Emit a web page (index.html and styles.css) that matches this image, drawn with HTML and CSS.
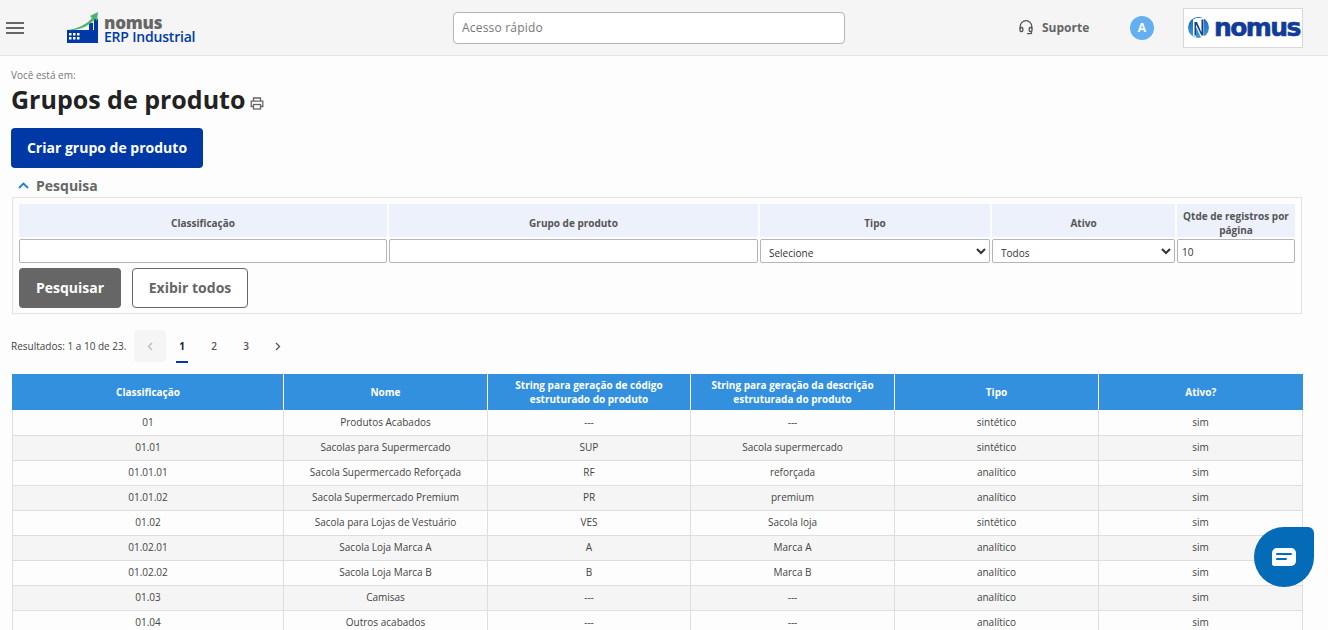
FILE: index.html
```html
<!DOCTYPE html>
<html lang="pt-BR">
<head>
<meta charset="utf-8">
<title>Grupos de produto</title>
<link rel="stylesheet" href="styles.css">
</head>
<body>
<header class="topbar">
  <button class="burger" aria-label="Menu"><span></span><span></span><span></span></button>
  <div class="brand">
    <svg class="brand-mark" width="31" height="31" viewBox="0 0 31 31">
      <rect x="0" y="18" width="31" height="13" fill="#0039a6"/>
      <rect x="22" y="11" width="4" height="8" fill="#0039a6"/>
      <rect x="27" y="7" width="4" height="12" fill="#0039a6"/>
      <path d="M0 18C10 17 19 13 25 6l-2-2 8-4-1 9-2-2C22 14 12 19 0 18z" fill="#4fb36f"/>
      <g fill="#fff"><rect x="2" y="21" width="2.500" height="2.500"/><rect x="6" y="21" width="2.500" height="2.500"/><rect x="10" y="21" width="2.500" height="2.500"/><rect x="2" y="25" width="2.500" height="2.500"/><rect x="6" y="25" width="2.500" height="2.500"/><rect x="10" y="25" width="2.500" height="2.500"/></g>
    </svg>
    <div class="brand-text"><span class="brand-top">nomus</span><span class="brand-bottom">ERP Industrial</span></div>
  </div>
  <input class="quick" type="text" placeholder="Acesso rápido">
  <div class="support">
    <svg width="14" height="15" viewBox="0 0 14 15" fill="none" stroke="#555" stroke-width="1.300"><path d="M1.200 9V6.500a5.800 5.800 0 0 1 11.600 0V9"/><rect x="1" y="7.500" width="2.800" height="4" rx="1"/><rect x="10.200" y="7.500" width="2.800" height="4" rx="1"/><path d="M12.500 11.500v1.200a1 1 0 0 1-1 1H8"/></svg>
    <span>Suporte</span>
  </div>
  <div class="avatar">A</div>
  <div class="company">
    <svg width="21" height="21" viewBox="0 0 21 21">
      <defs><linearGradient id="nb" x1="0" y1="0" x2="0" y2="1"><stop offset="0" stop-color="#1a66b5"/><stop offset="1" stop-color="#3aa0dc"/></linearGradient></defs>
      <circle cx="10.500" cy="10.500" r="10.500" fill="url(#nb)"/>
      <path d="M5 2.500 8 1h8v19l-3 0.500L8 10v10l-3-1z" fill="#fff"/>
      <path d="M6.500 5h2.500l4.500 10.500V2.500H15.500v16h-2L8 7.500V18.500H6.500z" fill="#12408f"/>
    </svg>
    <span>nomus</span>
  </div>
</header>

<main class="page">
  <p class="crumb">Você está em:</p>
  <div class="title-row">
    <h1>Grupos de produto</h1>
    <svg width="14" height="13" viewBox="0 0 14 13" fill="none" stroke="#666" stroke-width="1.300"><path d="M3.500 4V1h7v3"/><path d="M3.500 9.500H1.200V4.200h11.600v5.300h-2.300"/><rect x="3.500" y="7.500" width="7" height="4.500"/></svg>
  </div>
  <button class="btn-primary">Criar grupo de produto</button>

  <div class="section-head">
    <svg width="11" height="7" viewBox="0 0 11 7" fill="none" stroke="#1c7ed6" stroke-width="1.800"><path d="M1 6l4.500-4.500L10 6"/></svg>
    <span>Pesquisa</span>
  </div>
  <section class="filters">
    <div class="filter-grid">
      <div class="fh">Classificação</div>
      <div class="fh">Grupo de produto</div>
      <div class="fh">Tipo</div>
      <div class="fh">Ativo</div>
      <div class="fh">Qtde de registros por página</div>
      <input class="field" type="text">
      <input class="field" type="text">
      <select class="field field-select"><option>Selecione</option></select>
      <select class="field field-select"><option>Todos</option></select>
      <input class="field" type="text" value="10">
    </div>
    <div class="filter-actions">
      <button class="btn-dark">Pesquisar</button>
      <button class="btn-outline">Exibir todos</button>
    </div>
  </section>

  <nav class="pager">
    <span class="results">Resultados: 1 a 10 de 23.</span>
    <span class="pg pg-disabled"><svg width="6" height="9" viewBox="0 0 6 9" fill="none" stroke="#bbb" stroke-width="1.300"><path d="M5 1L1.500 4.500 5 8"/></svg></span>
    <span class="pg pg-current">1</span>
    <span class="pg">2</span>
    <span class="pg">3</span>
    <span class="pg"><svg width="6" height="9" viewBox="0 0 6 9" fill="none" stroke="#555" stroke-width="1.300"><path d="M1 1l3.500 3.500L1 8"/></svg></span>
  </nav>

  <table class="grid">
    <colgroup><col class="c1"><col class="c2"><col class="c3"><col class="c4"><col class="c5"><col class="c6"></colgroup>
    <thead>
      <tr><th>Classificação</th><th>Nome</th><th>String para geração de código estruturado do produto</th><th>String para geração da descrição estruturada do produto</th><th>Tipo</th><th>Ativo?</th></tr>
    </thead>
    <tbody>
      <tr><td>01</td><td>Produtos Acabados</td><td>---</td><td>---</td><td>sintético</td><td>sim</td></tr>
      <tr><td>01.01</td><td>Sacolas para Supermercado</td><td>SUP</td><td>Sacola supermercado</td><td>sintético</td><td>sim</td></tr>
      <tr><td>01.01.01</td><td>Sacola Supermercado Reforçada</td><td>RF</td><td>reforçada</td><td>analítico</td><td>sim</td></tr>
      <tr><td>01.01.02</td><td>Sacola Supermercado Premium</td><td>PR</td><td>premium</td><td>analítico</td><td>sim</td></tr>
      <tr><td>01.02</td><td>Sacola para Lojas de Vestuário</td><td>VES</td><td>Sacola loja</td><td>sintético</td><td>sim</td></tr>
      <tr><td>01.02.01</td><td>Sacola Loja Marca A</td><td>A</td><td>Marca A</td><td>analítico</td><td>sim</td></tr>
      <tr><td>01.02.02</td><td>Sacola Loja Marca B</td><td>B</td><td>Marca B</td><td>analítico</td><td>sim</td></tr>
      <tr><td>01.03</td><td>Camisas</td><td>---</td><td>---</td><td>analítico</td><td>sim</td></tr>
      <tr><td>01.04</td><td>Outros acabados</td><td>---</td><td>---</td><td>analítico</td><td>sim</td></tr>
    </tbody>
  </table>
</main>

<button class="chat" aria-label="Chat">
  <svg width="24" height="18" viewBox="0 0 24 18"><path d="M5 0h14a5 5 0 0 1 5 5v8a5 5 0 0 1-5 5H1.500L0 16.500V5a5 5 0 0 1 5-5z" fill="#fff"/><path d="M5 6h14M5 11h9" stroke="#036bb8" stroke-width="2" stroke-linecap="round"/></svg>
</button>
</body>
</html>
```

FILE: styles.css
```css
* { box-sizing: border-box; }
html, body { height: 630px; overflow: hidden; }
body {
  margin: 0;
  background: #fdfdfd;
  font-family: "Open Sans", "Liberation Sans", sans-serif;
  color: #333;
}
button { font-family: inherit; cursor: pointer; }

.topbar {
  height: 56px;
  background: #f5f5f5;
  border-bottom: 1px solid #e4e4e4;
  display: flex;
  align-items: center;
}
.burger {
  margin-left: 6px;
  width: 18px;
  height: 12px;
  padding: 0;
  border: 0;
  background: none;
  display: flex;
  flex-direction: column;
  justify-content: space-between;
}
.burger span { display: block; height: 2px; background: #666; }
.brand { margin-left: 43px; display: flex; align-items: flex-end; gap: 6px; width: 129px; height: 31px; flex: none; }
.brand-mark { flex: none; }
.brand-text { display: flex; flex-direction: column; line-height: 14px; margin-bottom: -1px; }
.brand-top { font-size: 17px; font-weight: 800; color: #666; letter-spacing: -0.2px; }
.brand-bottom { font-size: 14px; font-weight: 600; color: #0039a6; white-space: nowrap; letter-spacing: -0.2px; }
.quick {
  margin-left: 257px;
  width: 392px;
  height: 32px;
  border: 1px solid #b5b5b5;
  border-radius: 4px;
  background: #fff;
  padding: 0 8px;
  font: 12px "Open Sans", sans-serif;
  letter-spacing: 0.2px;
}
.quick::placeholder { color: #777; opacity: 1; }
.support { margin-left: 174px; display: flex; align-items: center; gap: 9px; width: 111px; font-size: 12px; font-weight: 700; color: #666; }
.avatar {
  width: 24px; height: 24px; border-radius: 50%;
  background: #64aef2; color: #fff;
  font-size: 12px; font-weight: 700;
  display: flex; align-items: center; justify-content: center;
}
.company {
  margin-left: 29px;
  width: 120px; height: 40px;
  border: 1px solid #d8d8d8;
  background: #fff;
  display: flex; align-items: center; gap: 5px;
  padding-left: 4px;
}
.company span { font: 700 25px/1 "DejaVu Sans", sans-serif; color: #123c96; letter-spacing: -1.6px; -webkit-text-stroke: 0.6px #123c96; }

.page { padding: 0 25px 0 11px; }
.crumb { margin: 12px 0 0; font-size: 10px; line-height: 14px; color: #777; }
.title-row { display: flex; align-items: flex-end; gap: 5px; height: 32px; margin-top: 1px; }
.title-row h1 { margin: 0; font-size: 25px; line-height: 32px; font-weight: 700; color: #222; }
.title-row svg { margin-bottom: 5px; }
.btn-primary {
  display: block;
  margin-top: 13px;
  width: 192px; height: 40px;
  padding: 0 0 2px;
  border: 0; border-radius: 4px;
  background: #0039a6; color: #fff;
  font-size: 14px; font-weight: 700;
}
.section-head { display: flex; align-items: center; gap: 7px; height: 18px; padding-bottom: 2px; margin: 9px 0 0 7px; font-size: 14px; font-weight: 700; color: #666; }
.filters {
  margin: 2px 0 0 1px;
  width: 1290px; height: 117px;
  border: 1px solid #e2e2e2;
  padding: 6px;
}
.filter-grid {
  display: grid;
  grid-template-columns: 368px 369px 230px 183px 118px;
  column-gap: 2px;
  row-gap: 2px;
  grid-template-rows: 33px 24px;
}
.fh {
  background: #ecf1fb;
  display: flex; align-items: center; justify-content: center;
  text-align: center;
  padding-top: 5px;
  font-size: 10px; line-height: 14px; font-weight: 700; color: #555;
}
.field {
  width: 100%; height: 24px;
  border: 1px solid #b5b5b5;
  border-radius: 2px;
  background: #fff;
  padding: 1px 4px 0;
  font: 10px "Open Sans", sans-serif;
  color: #333;
}
.field-select { padding-top: 3px; }
.filter-actions { display: flex; gap: 11px; margin-top: 5px; }
.btn-dark, .btn-outline { height: 40px; padding: 0 0 2px; border-radius: 4px; font-size: 14px; font-weight: 700; }
.btn-dark { width: 102px; background: #666; color: #fff; border: 0; }
.btn-outline { width: 116px; background: #fff; color: #666; border: 1px solid #666; }

.pager { display: flex; align-items: center; height: 32px; margin-top: 16px; }
.results { font-size: 10px; color: #444; width: 123px; }
.pg {
  width: 32px; height: 32px;
  display: flex; align-items: center; justify-content: center;
  font-size: 10px; font-weight: 600; color: #555;
  border-radius: 4px;
  position: relative;
}
.pg-disabled { background: #f5f5f5; }
.pg-current { color: #222; font-weight: 700; }
.pg-current::after {
  content: "";
  position: absolute;
  left: 10px; right: 10px; bottom: -1px;
  height: 2px;
  background: #0039a6;
}

.grid {
  margin: 12px 0 0 1px;
  width: 1290px;
  table-layout: fixed;
  border-collapse: collapse;
}
.c1 { width: 271px; } .c2 { width: 204px; } .c3 { width: 203px; } .c4 { width: 204px; } .c5 { width: 204px; } .c6 { width: 204px; }
.grid th {
  height: 36px;
  background: #3290df;
  color: #fff;
  font-size: 10px; line-height: 14px; font-weight: 700;
  border-left: 1px solid #fff;
  padding: 0 10px;
}
.grid th:first-child { border-left-color: #3290df; }
.grid td {
  height: 25px;
  padding: 0 0 1px;
  text-align: center;
  font-size: 10px;
  color: #444;
  border: 1px solid #dedede;
  border-top: 0;
}
.grid tbody tr:nth-child(even) td { background: #f5f5f5; }

.chat {
  position: fixed;
  left: 1254px; top: 527px;
  width: 60px; height: 60px;
  border: 0; padding: 0;
  background: #036bb8;
  border-radius: 50% 6px 50% 50%;
  display: flex; align-items: center; justify-content: center;
}
```
